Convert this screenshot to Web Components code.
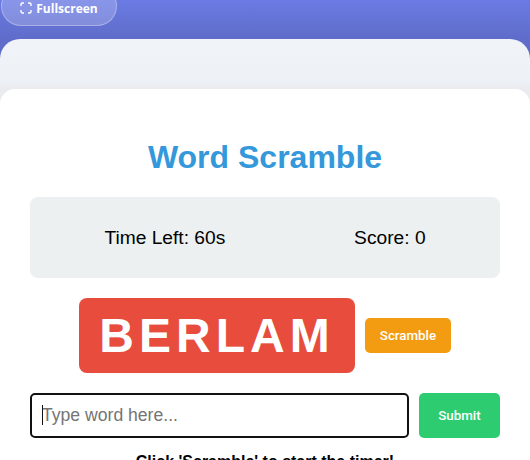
<!DOCTYPE html>
<html>
<head>
<meta charset="utf-8">
<title>Word Scramble</title>
<style>
  html, body { margin: 0; height: 460px; overflow: hidden; }
  body {
    background: linear-gradient(180deg, #6b7be4 0%, #5f6cc9 39px, #5f6cc9 100%);
    font-family: "Liberation Sans", Arial, sans-serif;
  }
</style>
</head>
<body>
<game-page>
  <fullscreen-button slot="top">Fullscreen</fullscreen-button>
  <game-card>
    <stats-bar></stats-bar>
    <word-row word="BERLAM"></word-row>
    <guess-form></guess-form>
    <span slot="message">Click 'Scramble' to start the timer!</span>
  </game-card>
</game-page>

<script>
class GamePage extends HTMLElement {
  constructor() {
    super();
    this.attachShadow({ mode: "open" }).innerHTML = `
      <style>
        :host { display: block; height: 460px; overflow: hidden; }
        .top { height: 39px; display: flow-root; }
        .panel {
          box-sizing: border-box;
          background: linear-gradient(180deg, #f0f3f8 0%, #eef1f6 40px, #e9ebef 50px);
          border-radius: 20px 20px 0 0;
          padding-top: 50px;
          height: 421px;
        }
      </style>
      <div class="top"><slot name="top"></slot></div>
      <div class="panel"><slot></slot></div>
    `;
  }
}

class FullscreenButton extends HTMLElement {
  constructor() {
    super();
    this.attachShadow({ mode: "open" }).innerHTML = `
      <style>
        :host { display: block; width: 116px; margin: -14px 0 0 1px; }
        button {
          box-sizing: border-box;
          width: 116px;
          height: 40px;
          padding: 4px 0 0 0;
          display: flex;
          align-items: center;
          justify-content: center;
          gap: 4px;
          color: #fff;
          background: rgba(255, 255, 255, 0.2);
          border: 1.5px solid rgba(255, 255, 255, 0.3);
          border-radius: 20px;
          font: 700 12px "Open Sans", sans-serif;
        }
        svg { width: 12px; height: 12px; }
      </style>
      <button>
        <svg viewBox="0 0 12 12" fill="none" stroke="#fff" stroke-width="1.4">
          <path d="M1 4V2.5A1.5 1.5 0 0 1 2.5 1H4M8 1h1.5A1.5 1.5 0 0 1 11 2.5V4M11 8v1.5A1.5 1.5 0 0 1 9.5 11H8M4 11H2.5A1.5 1.5 0 0 1 1 9.5V8"/>
        </svg>
        <slot></slot>
      </button>
    `;
  }
}

class GameCard extends HTMLElement {
  constructor() {
    super();
    this.attachShadow({ mode: "open" }).innerHTML = `
      <style>
        :host {
          display: block;
          background: #fff;
          border-radius: 15px 15px 0 0;
          padding: 50px 30px 0;
          height: 371px;
          box-sizing: border-box;
          text-align: center;
        }
        h1 {
          margin: 0 0 20px;
          height: 38px;
          font: 700 32px/36px "Liberation Sans", Arial, sans-serif;
          color: #3498db;
        }
        .message {
          margin-top: 15px;
          font: 700 16px/18px "Liberation Sans", Arial, sans-serif;
          color: #000;
        }
      </style>
      <h1>Word Scramble</h1>
      <slot></slot>
      <div class="message"><slot name="message"></slot></div>
    `;
  }
}

class StatsBar extends HTMLElement {
  constructor() {
    super();
    this.attachShadow({ mode: "open" }).innerHTML = `
      <style>
        :host {
          display: flex;
          height: 81px;
          padding: 0 10px;
          align-items: center;
          justify-content: space-around;
          background: #ecf0f1;
          border-radius: 8px;
          font: 400 19.2px "Liberation Sans", Arial, sans-serif;
          color: #000;
        }
      </style>
      <span>Time Left: 60s</span>
      <span>Score: 0</span>
    `;
  }
}

class WordRow extends HTMLElement {
  constructor() {
    super();
    this.attachShadow({ mode: "open" }).innerHTML = `
      <style>
        :host {
          display: flex;
          align-items: center;
          justify-content: center;
          gap: 10px;
          margin-top: 20px;
        }
        .word {
          box-sizing: border-box;
          height: 75px;
          width: 276px;
          display: flex;
          align-items: center;
          justify-content: center;
          background: #e74c3c;
          color: #fff;
          border-radius: 8px;
          font: 700 48px "Liberation Sans", Arial, sans-serif;
          letter-spacing: 5px;
        }
        button {
          width: 86px;
          height: 35px;
          padding: 0;
          background: #f39c12;
          color: #fff;
          border: 0;
          border-radius: 5px;
          font: 500 13.33px Roboto, sans-serif;
        }
      </style>
      <div class="word"></div>
      <button>Scramble</button>
    `;
  }
  connectedCallback() {
    this.shadowRoot.querySelector(".word").textContent = this.getAttribute("word");
  }
}

class GuessForm extends HTMLElement {
  constructor() {
    super();
    this.attachShadow({ mode: "open" }).innerHTML = `
      <style>
        :host {
          display: flex;
          gap: 10px;
          margin-top: 20px;
          height: 45px;
        }
        .field { position: relative; flex: 1; display: flex; }
        input {
          box-sizing: border-box;
          width: 100%;
          height: 45px;
          padding: 0 10px;
          border: 2px solid #111;
          border-radius: 5px;
          outline: none;
          background: #fff;
          font: 400 17.6px "Liberation Sans", Arial, sans-serif;
        }
        input::placeholder { color: #757575; }
        .caret {
          position: absolute;
          left: 12px;
          top: 12px;
          width: 1px;
          height: 20px;
          background: #111;
        }
        button {
          width: 81px;
          height: 45px;
          padding: 0;
          background: #2ecc71;
          color: #fff;
          border: 0;
          border-radius: 5px;
          font: 500 13.33px Roboto, sans-serif;
        }
      </style>
      <div class="field">
        <input type="text" placeholder="Type word here...">
        <span class="caret"></span>
      </div>
      <button>Submit</button>
    `;
  }
}

customElements.define("game-page", GamePage);
customElements.define("fullscreen-button", FullscreenButton);
customElements.define("game-card", GameCard);
customElements.define("stats-bar", StatsBar);
customElements.define("word-row", WordRow);
customElements.define("guess-form", GuessForm);
</script>
</body>
</html>
